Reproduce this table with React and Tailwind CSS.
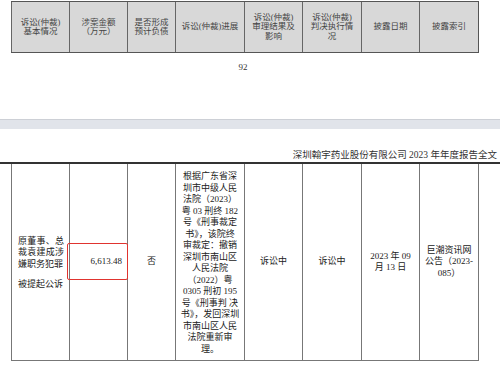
import React from "react";

const FONT = { fontFamily: '"Liberation Serif", "Noto Sans CJK SC", serif' };

const headers = [
  ["诉讼(仲裁)", "基本情况"],
  ["涉案金额", "（万元）"],
  ["是否形成", "预计负债"],
  ["诉讼(仲裁)进展"],
  ["诉讼(仲裁)", "审理结果及", "影响"],
  ["诉讼(仲裁)", "判决执行情", "况"],
  ["披露日期"],
  ["披露索引"],
];

const progress = [
  "根据广东省深",
  "圳市中级人民",
  "法院（2023）",
  "粤 03 刑终 182",
  "号《刑事裁定",
  "书》，该院终",
  "审裁定：撤销",
  "深圳市南山区",
  "人民法院",
  "（2022）粤",
  "0305 刑初 195",
  "号《刑事判 决",
  "书》，发回深圳",
  "市南山区人民",
  "法院重新审",
  "理。",
];

const cols = "grid grid-cols-[58px_58px_48px_69px_58px_59px_58px_59px]";

export default function App() {
  return (
    <div className="w-[500px] h-[365px] bg-white overflow-hidden flex flex-col text-[#222]" style={FONT}>
      {/* top header table (continued from previous page) */}
      <div className={`${cols} ml-[11px] mt-[1px] w-[468px] h-[52px] border-t border-b border-r border-[#555]`}>
        {headers.map((lines, i) => (
          <div
            key={i}
            className="border-l border-[#666] bg-[#d8d8d8] flex flex-col items-center justify-center text-[8.5px] leading-[9.5px] text-[#444] text-center"
          >
            {lines.map((l, j) => (
              <span key={j} className="block whitespace-nowrap">{l}</span>
            ))}
          </div>
        ))}
      </div>

      {/* page number */}
      <div className="mt-[8px] h-[12px] text-[9px] leading-[12px] text-center pr-[14px] text-[#333]">92</div>

      {/* page gap band */}
      <div className="mt-[46px] h-[10px] bg-[#e1e4ea] border-t border-[#cdd0d6]" />

      {/* running header */}
      <div className="mt-[20px] h-[12px] text-[9.5px] leading-[12px] text-right pr-[3px] text-[#333] whitespace-nowrap">
        深圳翰宇药业股份有限公司 2023 年年度报告全文
      </div>
      <div className="mt-[1px] h-[2px] bg-[#333]" />

      {/* body table */}
      <div className={`${cols} ml-[11px] w-[468px] h-[197px] border-b border-r border-[#777] text-[9px] leading-[11.5px]`}>
        <div className="border-l border-[#777] flex flex-col justify-center pl-[6px] pt-[2px]">
          <span className="block w-[46px] [text-align-last:justify]">原董事、总</span>
          <span className="block w-[46px] [text-align-last:justify]">裁袁建成涉</span>
          <span className="block">嫌职务犯罪</span>
          <span className="block mt-[8.5px]">被提起公诉</span>
        </div>
        <div className="relative border-l border-[#777] flex items-center justify-end pr-[5px]">
          <span>6,613.48</span>
          <div className="absolute left-[-3px] top-[79px] w-[61px] h-[37px] border-[1.5px] border-[#e0342f] rounded-[2px]" />
        </div>
        <div className="border-l border-[#777] flex items-center justify-center">否</div>
        <div className="border-l border-[#777] flex flex-col items-center justify-center pt-[2px]">
          {progress.map((l, i) => (
            <span key={i} className="block whitespace-nowrap">{l}</span>
          ))}
        </div>
        <div className="border-l border-[#777] flex items-center justify-center">诉讼中</div>
        <div className="border-l border-[#777] flex items-center justify-center">诉讼中</div>
        <div className="border-l border-[#777] flex flex-col items-center justify-center">
          <span>2023 年 09</span>
          <span>月 13 日</span>
        </div>
        <div className="border-l border-[#777] flex flex-col items-center justify-center">
          <span>巨潮资讯网</span>
          <span>公告（2023-</span>
          <span>085）</span>
        </div>
      </div>
    </div>
  );
}
